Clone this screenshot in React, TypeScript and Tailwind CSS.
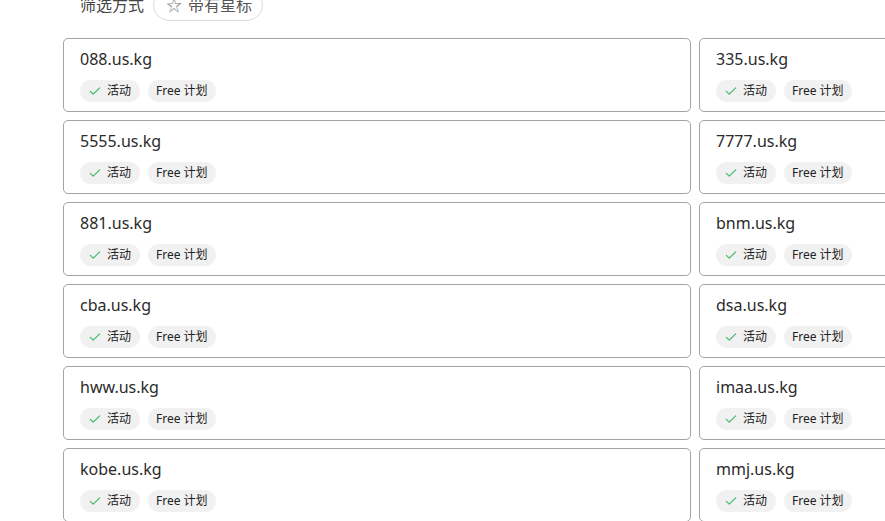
import React from "react";

const left = ["088.us.kg", "5555.us.kg", "881.us.kg", "cba.us.kg", "hww.us.kg", "kobe.us.kg"];
const right = ["335.us.kg", "7777.us.kg", "bnm.us.kg", "dsa.us.kg", "imaa.us.kg", "mmj.us.kg"];

function Check() {
  return (
    <svg width="14" height="14" viewBox="0 0 24 24" fill="none" stroke="#3fb96a" strokeWidth="2" strokeLinecap="round" strokeLinejoin="round">
      <path d="M4 12.5l5 5L20 6.5" />
    </svg>
  );
}

function Card({ name }: { name: string }) {
  return (
    <div className="border border-[#a3a3a3] rounded-[5px] bg-white px-4 pt-2 pb-[9px] h-[74px]">
      <div className="text-[16px] leading-[24px] text-[#2b2b2b]">{name}</div>
      <div className="mt-[9px] flex gap-2">
        <span className="h-[22px] rounded-full bg-[#f1f1f1] pl-2 pr-[9px] flex items-center gap-[5px] text-[12px] text-[#222]">
          <Check />
          活动
        </span>
        <span className="h-[22px] rounded-full bg-[#f1f1f1] px-2 flex items-center text-[12px] text-[#222]">
          Free 计划
        </span>
      </div>
    </div>
  );
}

export default function App() {
  return (
    <div
      className="w-[885px] h-[521px] overflow-hidden bg-white"
      style={{ fontFamily: '"Noto Sans", "Noto Sans CJK SC", sans-serif' }}
    >
      <div className="pl-[63px] -mt-[11px]">
        <div className="flex items-center gap-[9px] pl-[17px] h-8">
          <span className="text-[16px] text-[#444]">筛选方式</span>
          <span className="h-8 pl-3 pr-[10px] rounded-full border border-[#dcdcdc] flex items-center gap-[6px] text-[16px] text-[#555]">
            <span className="text-[16px] text-[#888]">☆</span>
            带有星标
          </span>
        </div>
        <div className="mt-[17px] grid grid-cols-[628px_628px] gap-x-2 gap-y-2 w-[1264px]">
          {left.map((l, i) => (
            <React.Fragment key={l}>
              <Card name={l} />
              <Card name={right[i]} />
            </React.Fragment>
          ))}
        </div>
      </div>
    </div>
  );
}
